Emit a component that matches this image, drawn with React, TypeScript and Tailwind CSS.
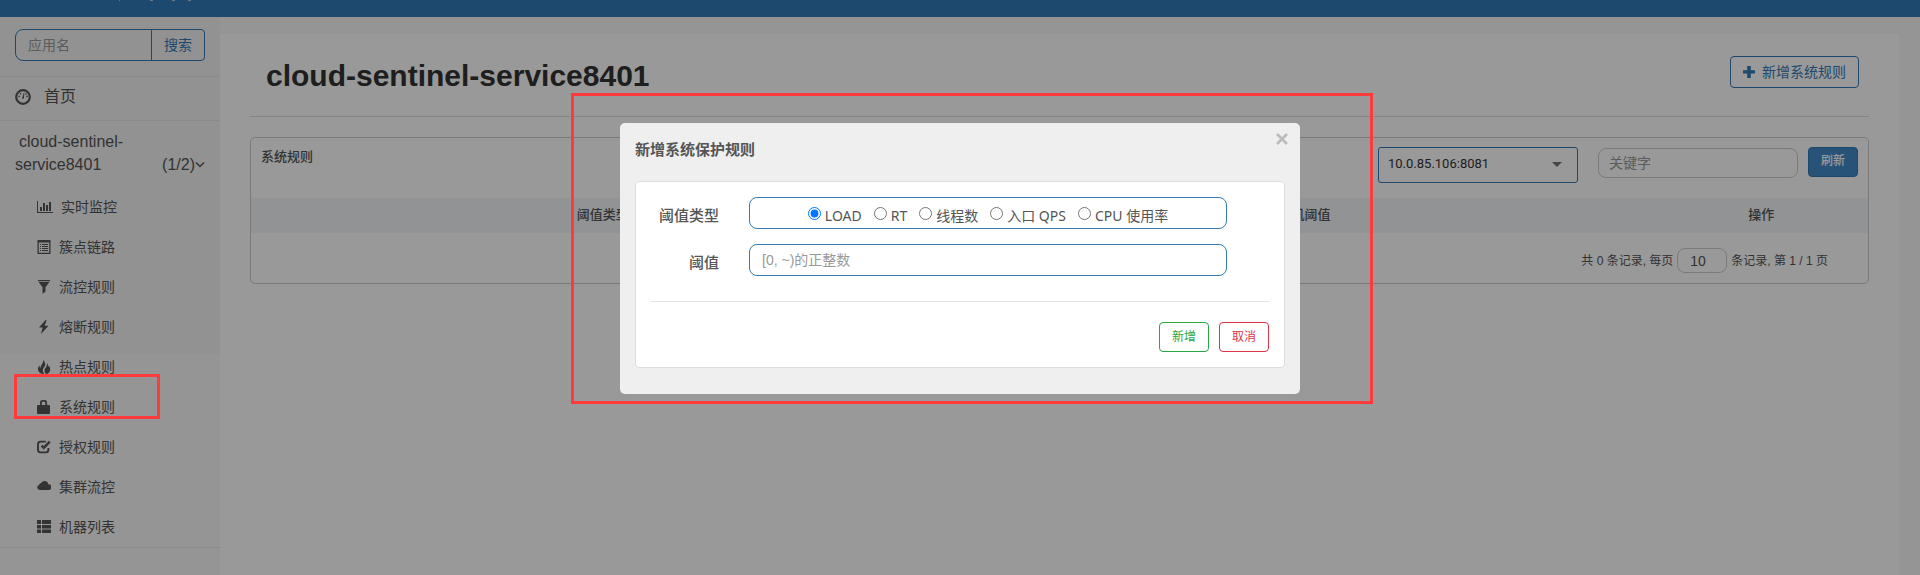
import type { ReactNode } from 'react';

const Svg = ({ children }: { children: ReactNode }) => (
  <svg viewBox="0 0 14 14" className="size-[14px] shrink-0" fill="currentColor" aria-hidden="true">
    {children}
  </svg>
);

const Dashboard = () => (
  <svg viewBox="0 0 16 16" className="size-4 shrink-0" fill="currentColor" aria-hidden="true">
    <circle cx="8" cy="8" r="6.8" fill="none" stroke="currentColor" strokeWidth="2.2" />
    <path d="M8.8 3.8 9.4 4 8.9 8.2a1 1 0 1 1-1.3-.3z" />
    <circle cx="4.2" cy="7.4" r=".8" />
    <circle cx="5.6" cy="4.8" r=".8" />
    <circle cx="11" cy="5" r=".8" />
    <circle cx="12" cy="7.4" r=".8" />
  </svg>
);

const items: { label: string; icon: ReactNode }[] = [
  {
    label: '实时监控',
    icon: (
      <svg viewBox="0 0 16 14" className="h-[14px] w-4 shrink-0" fill="currentColor" aria-hidden="true">
        <path d="M0 1h1v11h15v1H0zM3 7h2v4H3zM6 3h2v8H6zM9 5h2v6H9zM12 2h2v9h-2z" />
      </svg>
    ),
  },
  {
    label: '簇点链路',
    icon: (
      <Svg>
        <path fillRule="evenodd" d="M.5 0h13v14H.5zM1.8 2.6v10.2h10.4V2.6z" />
        <path d="M3 4h1v1H3zM5 4h6v1H5zM3 6h1v1H3zM5 6h6v1H5zM3 8h1v1H3zM5 8h6v1H5zM3 10h1v1H3zM5 10h6v1H5z" />
      </Svg>
    ),
  },
  {
    label: '流控规则',
    icon: (
      <Svg>
        <path d="M1 0h12v1.2H1zM1.6 2h10.8L8.5 7.2v4.2L5.5 13.8V7.2z" />
      </Svg>
    ),
  },
  {
    label: '熔断规则',
    icon: (
      <Svg>
        <path d="M8.6 0 2 7.6h3.6L4 14l7.5-8.2H7.6L9.6.3z" />
      </Svg>
    ),
  },
  {
    label: '热点规则',
    icon: (
      <Svg>
        <path d="M6.2 0C7.4 1.300 8.400 3 8.200 4.900 8 6.700 6 7.700 5.800 9.600c-.1 1.500.4 3 1.400 4.400C4.500 14 2.200 12.800 1.300 10.700.6 8.700 1.200 6.700 2.400 5.200c0 1.200.3 2.200 1.100 2.900C3.400 5.300 6.600 3.600 6.200 0zM9.900 3c1.200 1.300 1.300 2.600 1 4 .5-.3.8-.8.9-1.500 1.200 1.600 1.800 3.600 1.200 5.400-.6 1.600-2 2.700-3.900 3.100C7.800 12.600 7.200 11.200 7.600 9.700 8.200 7.800 10.500 6.400 9.900 3z" />
      </Svg>
    ),
  },
  {
    label: '系统规则',
    icon: (
      <Svg>
        <path d="M3 5V2.600Q3 0 5.500 0h2.200q2.400 0 2.400 2.600V5H12q1 0 1 1v7q0 1-1 1H1q-1 0-1-1V6q0-1 1-1zM4.800 5h3.500V2.800Q8.300 1.700 7.300 1.700H5.800Q4.800 1.700 4.800 2.800z" fillRule="evenodd" />
      </Svg>
    ),
  },
  {
    label: '授权规则',
    icon: (
      <Svg>
        <path d="M8.800 1.600H3.600Q1 1.600 1 4.200v5.600q0 2.600 2.600 2.600h5.200q2.600 0 2.600-2.600V8" fill="none" stroke="currentColor" strokeWidth="1.900" />
        <path d="M4.600 5.600 6.800 7.800 12.800 1.600" fill="none" stroke="currentColor" strokeWidth="2.400" />
      </Svg>
    ),
  },
  {
    label: '集群流控',
    icon: (
      <Svg>
        <path d="M2.800 10a2.700 2.700 0 0 1-.6-5.300Q2.500 2.900 4.200 2.900A3.900 3.900 0 0 1 11.400 4.200 2.900 2.900 0 0 1 11.400 10z" />
      </Svg>
    ),
  },
  {
    label: '机器列表',
    icon: (
      <Svg>
        <path d="M0 0h4v4H0zM5 0h9v4H5zM0 5h4v3.500H0zM5 5h9v3.500H5zM0 9.500h4V13H0zM5 9.500h9V13H5z" />
      </Svg>
    ),
  },
];

const types = ['LOAD', 'RT', '线程数', '入口 QPS', 'CPU 使用率'];

export default function App() {
  return (
    <div className="relative flex min-h-screen flex-col bg-[#f8f8f8] font-['Liberation_Sans','Noto_Sans_CJK_SC',sans-serif] text-sm text-[#555]">
      <header className="h-[17px] bg-[#337ab7] pl-[119px]">
        <svg viewBox="0 0 72 1" className="h-px w-[72px]" fill="#fff" fillOpacity=".6" aria-hidden="true">
          <path d="M0 0h1v1H0zM31 0h3v1h-3zM53 0h3v1h-3zM69 0h3v1h-3z" />
        </svg>
      </header>
      <div className="flex flex-1">
        <aside className="w-[220px] shrink-0 bg-[linear-gradient(#f4f4f4_337px,#f8f8f8_337px)]">
          <form className="flex h-[59px] px-[15px] pt-3">
            <input aria-label="应用名" placeholder="应用名" className="h-8 w-[137px] rounded-l-lg border border-[#337ab7] bg-transparent px-3 text-sm placeholder:text-[#999]" />
            <button type="button" className="-ml-px h-8 flex-1 rounded-r border border-[#337ab7] text-sm text-[#337ab7]">搜索</button>
          </form>
          <a href="#home" className="flex h-[45px] items-center gap-[13px] border-y border-[#e7e7e7] px-[15px] pb-1 text-base">
            <Dashboard />
            首页
          </a>
          <a href="#app" className="flex h-[66px] items-end justify-between px-[15px] pb-[11px] text-base leading-[23px]">
            <span className="w-[120px] indent-1">cloud-sentinel-service8401</span>
            <span className="flex items-center">
              (1/2)
              <svg viewBox="0 0 10 8" className="h-2 w-[10px]" fill="none" stroke="currentColor" strokeWidth="1.500" aria-hidden="true">
                <path d="m1 1.500 4 4 4-4" />
              </svg>
            </span>
          </a>
          <nav className="border-b border-[#e7e7e7]">
            {items.map((it) => (
              <a key={it.label} href="#rules" className="flex h-10 items-center gap-2 px-[37px]">
                {it.icon}
                {it.label}
              </a>
            ))}
          </nav>
        </aside>
        <main className="mr-[21px] mt-[17px] flex-1 bg-white px-[30px]">
          <div className="flex h-[83px] items-start justify-between border-b border-[#ddd] pl-4 pr-[10px] pt-[22px]">
            <h1 className="text-[30px] font-bold leading-10 text-[#333]">cloud-sentinel-service8401</h1>
            <button type="button" className="flex h-8 items-center gap-[7px] rounded border border-[#337ab7] px-3 text-sm text-[#337ab7]">
              <svg viewBox="0 0 12 12" className="size-3" fill="currentColor" aria-hidden="true">
                <path d="M4.200 0h3.600v4.200H12v3.300H7.800V12H4.200V7.500H0V4.200h4.200z" />
              </svg>
              新增系统规则
            </button>
          </div>
          <section className="mt-5 rounded-[5px] border border-[#ccc]">
            <div className="flex h-[60px] items-start justify-between px-[10px] pt-[9px]">
              <h2 className="text-[13px] font-medium leading-5">系统规则</h2>
              <div className="flex items-start">
                <div className="relative">
                  <select aria-label="机器" className="h-9 w-[200px] appearance-none rounded-[3px] border border-[#337ab7] bg-white px-[9px] pb-0.5 font-[Roboto] text-[13px] text-[#333]">
                    <option>10.0.85.106:8081</option>
                  </select>
                  <svg viewBox="0 0 10 5" className="pointer-events-none absolute right-4 top-[15px] h-[5px] w-[10px]" fill="#777" aria-hidden="true">
                    <path d="M0 0h10L5 5z" />
                  </svg>
                </div>
                <input aria-label="关键字" placeholder="关键字" className="ml-5 mt-px h-[30px] w-[200px] rounded-lg border border-[#ccc] bg-white px-[10px] text-sm placeholder:text-[#999]" />
                <button type="button" className="ml-[10px] h-[30px] w-[50px] rounded border border-[#337ab7] bg-[#428bca] pb-0.5 text-xs font-medium text-white">刷新</button>
              </div>
            </div>
            <table className="w-full table-fixed text-[13px]">
              <thead>
                <tr className="h-[35px] bg-[#f3f5f9]">
                  <th className="w-[43.500%] font-medium">阈值类型</th>
                  <th className="font-medium">单机阈值</th>
                  <th className="w-[13.200%] font-medium">操作</th>
                </tr>
              </thead>
            </table>
            <div className="flex h-[50px] items-center justify-end gap-1 pr-10 pt-[5px] text-xs">
              <span>共 0 条记录, 每页</span>
              <input aria-label="每页条数" defaultValue="10" className="h-[25px] w-[50px] rounded-lg border border-[#ccc] bg-white px-3 text-sm" />
              <span>条记录, 第 1 / 1 页</span>
            </div>
          </section>
        </main>
      </div>

      <div className="absolute inset-0 bg-black/40" />

      <div role="dialog" aria-labelledby="title" className="absolute left-1/2 top-[123px] w-[680px] -translate-x-1/2 rounded-[5px] bg-[#efefef] px-[15px] pb-[26px] text-[#555]">
        <div className="flex h-[58px] items-start justify-between">
          <h2 id="title" className="pt-4 text-[15px] font-bold leading-[22px] text-[#555]">新增系统保护规则</h2>
          <button type="button" aria-label="关闭" className="-mr-[3px] mt-[10px] text-[#bbb]">
            <svg viewBox="0 0 12 12" className="size-3" stroke="currentColor" strokeWidth="2.600" aria-hidden="true">
              <path d="m1 1 10 10M11 1 1 11" />
            </svg>
          </button>
        </div>
        <form className="rounded border border-[#ddd] bg-white px-[15px] py-[15px]">
          <fieldset className="flex">
            <legend className="float-left w-[68px] pt-[7px] text-right text-[15px] font-medium leading-6">阈值类型</legend>
            <div className="ml-[30px] flex h-8 w-[478px] items-center justify-center gap-3 rounded-lg border border-[#337ab7] pt-[5px]">
              {types.map((t, i) => (
                <label key={t} className="flex items-center gap-1 font-['Noto_Sans','Noto_Sans_CJK_SC',sans-serif]">
                  <input type="radio" name="type" defaultChecked={i === 0} className="mb-1 size-[13px]" />
                  {t}
                </label>
              ))}
            </div>
          </fieldset>
          <div className="mt-[15px] flex">
            <label htmlFor="value" className="w-[68px] pt-[7px] text-right text-[15px] font-medium leading-6">阈值</label>
            <input id="value" placeholder="[0, ~)的正整数" className="ml-[30px] h-8 w-[478px] rounded-lg border border-[#337ab7] px-3 text-sm placeholder:text-[#999]" />
          </div>
          <div className="mt-[25px] flex justify-end gap-[10px] border-t border-[#e3e3e3] pt-5">
            <button type="button" className="h-[30px] w-[50px] rounded border border-[#28a745] text-xs text-[#28a745]">新增</button>
            <button type="button" className="h-[30px] w-[50px] rounded border border-[#dc3545] text-xs text-[#dc3545]">取消</button>
          </div>
        </form>
      </div>

      <div className="pointer-events-none absolute left-[14px] top-[374px] h-[45px] w-[146px] border-[3px] border-[#ff3a3a]" />
      <div className="pointer-events-none absolute left-1/2 top-[93px] -ml-[389px] h-[311px] w-[802px] border-[3px] border-[#ff3a3a]" />
    </div>
  );
}
